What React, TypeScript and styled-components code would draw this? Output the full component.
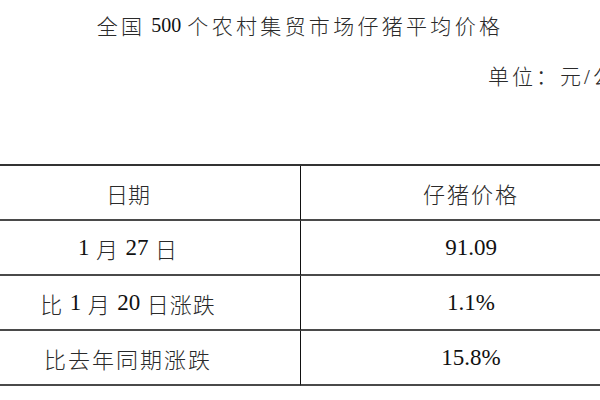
import React from "react";
import styled, { createGlobalStyle } from "styled-components";

const Global = createGlobalStyle`
  html, body { margin: 0; padding: 0; background: #ffffff; }
  body {
    width: 600px;
    height: 400px;
    overflow: hidden;
    font-family: "Liberation Serif", "Noto Sans CJK SC", serif;
    color: #1e1e1e;
  }
`;

const Page = styled.div`
  width: 600px;
  height: 400px;
  overflow: hidden;
  display: flex;
  flex-direction: column;
  background: #ffffff;
`;

const Title = styled.h1`
  margin: 0;
  height: 50px;
  display: flex;
  align-items: center;
  justify-content: center;
  font-weight: 300;
  font-size: 21px;
  letter-spacing: 3.3px;
  color: #2a2a2a;
  white-space: nowrap;
`;

const Latin = styled.span<{ $size: number; $gap?: number }>`
  font-family: "Liberation Serif", serif;
  font-size: ${(p) => p.$size}px;
  letter-spacing: 0;
  font-weight: 400;
  color: #111;
  margin: 0 ${(p) => p.$gap ?? 0}px;
`;

const Unit = styled.div`
  height: 50px;
  padding-left: 488px;
  display: flex;
  align-items: center;
  white-space: nowrap;
  font-size: 21px;
  font-weight: 300;
  letter-spacing: 3px;
  color: #2a2a2a;
`;

const Table = styled.div`
  margin-top: 64px;
  margin-left: -44px;
  width: 685px;
  flex-shrink: 0;
  display: grid;
  grid-template-columns: 345px 340px;
  border-top: 2px solid #333;
`;

const Cell = styled.div<{ $left?: boolean; $spacing?: number }>`
  height: 53px;
  border-bottom: 2px solid #4a4a4a;
  border-right: ${(p) => (p.$left ? "1px solid #111" : "none")};
  display: flex;
  align-items: center;
  justify-content: center;
  font-size: 22px;
  font-weight: 300;
  letter-spacing: ${(p) => p.$spacing ?? 1}px;
  color: #2a2a2a;
  white-space: nowrap;
`;

const rows: { left: React.ReactNode; right: React.ReactNode; sp?: number }[] = [
  { left: "日期", right: "仔猪价格", sp: 0 },
  {
    left: (
      <>
        <Latin $size={23}>1</Latin>&nbsp;月&nbsp;<Latin $size={23}>27</Latin>&nbsp;日
      </>
    ),
    right: <Latin $size={23}>91.09</Latin>,
  },
  {
    left: (
      <>
        比&nbsp;<Latin $size={23}>1</Latin>&nbsp;月&nbsp;<Latin $size={23}>20</Latin>&nbsp;日涨跌
      </>
    ),
    right: <Latin $size={23}>1.1%</Latin>,
  },
  { left: "比去年同期涨跌", right: <Latin $size={23}>15.8%</Latin>, sp: 2 },
];

export default function App() {
  return (
    <Page>
      <Global />
      <Title>
        全国<Latin $size={20} $gap={6}>500</Latin>个农村集贸市场仔猪平均价格
      </Title>
      <Unit>单位：元/公斤</Unit>
      <Table>
        {rows.map((r, i) => (
          <React.Fragment key={i}>
            <Cell $left $spacing={r.sp}>{r.left}</Cell>
            <Cell $spacing={i === 0 ? 2 : 1}>{r.right}</Cell>
          </React.Fragment>
        ))}
      </Table>
    </Page>
  );
}
